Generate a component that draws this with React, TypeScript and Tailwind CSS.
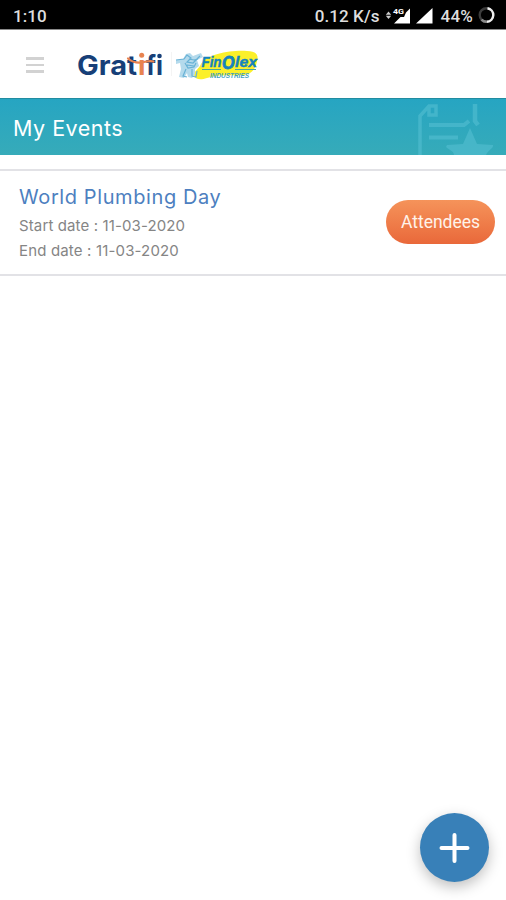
const EVENTS = [
  { title: 'World Plumbing Day', start: '11-03-2020', end: '11-03-2020' },
]

function StatusBar() {
  return (
    <div className="flex h-[30px] items-center border-b border-[#8a8a8a] bg-black pl-[13px] pr-[11px] pt-[3px] font-['Roboto',sans-serif] text-[17px] font-medium leading-none text-[#dedede]">
      <span className="tracking-[0.1px]">1:10</span>
      <span className="ml-auto tracking-[0.1px]">0.12 K/s</span>
      <svg className="ml-[5px]" width="50" height="20" viewBox="0 0 50 20" fill="#fff">
        <path d="M3.500 5.500 6.200 8.700H.8zM3.500 13 .8 9.800h5.400z" fill="#ccc" />
        <path d="M25 2.500v15H9l6.500-6.500h3.500l2-4.500z" />
        <text x="8" y="8" fontSize="8" fontWeight="700" textLength="11" lengthAdjust="spacingAndGlyphs">4G</text>
        <path d="M47.500 2v15.500H31z" />
      </svg>
      <span className="ml-[6px] text-[17px] tracking-[0.2px]">44%</span>
      <svg className="ml-[5px]" width="17" height="18" viewBox="0 0 17 18" fill="none" strokeWidth="2.400">
        <circle cx="8.500" cy="8" r="6.800" stroke="#3c3c3c" />
        <path d="M9.500 1.300A6.800 6.800 0 0 1 9 14.800" stroke="#eee" />
        <path d="M9 14.800A6.800 6.800 0 0 1 3.500 12.600" stroke="#8a8a8a" />
      </svg>
    </div>
  )
}

function GratifiLogo() {
  return (
    <svg width="88" height="36" viewBox="0 0 88 36" className="font-['Inter',sans-serif]">
      <g fontSize="27" fontWeight="700" fill="#173f78">
        <text x="1" y="28.500" textLength="50" lengthAdjust="spacingAndGlyphs">Gra</text>
        <text x="51" y="28.500" textLength="10" lengthAdjust="spacingAndGlyphs">t</text>
        <text x="62" y="28.500" fill="#e8834f" textLength="7.500" lengthAdjust="spacingAndGlyphs">ı</text>
        <text x="70" y="28.500" textLength="10" lengthAdjust="spacingAndGlyphs">f</text>
        <text x="80" y="28.500" textLength="7" lengthAdjust="spacingAndGlyphs">ı</text>
      </g>
      <circle cx="65.700" cy="9.300" r="2.500" fill="#e8834f" />
      <circle cx="83.500" cy="10" r="2.300" fill="#173f78" />
      <path d="M52 12.500c4 3.500 9 4.500 13.500 4 4-.500 8-2.500 12-1" fill="none" stroke="#e8834f" strokeWidth="2.200" strokeLinecap="round" />
    </svg>
  )
}

function FinolexLogo() {
  return (
    <svg width="86" height="36" viewBox="0 0 86 36" className="font-['Liberation_Sans',sans-serif]">
      <path d="M26 18C33 8 55 4 72 5c9 0 12 4 10 10-1 6-4 13-13 14-12 1-25-1-37 3-6 2-12 2-13-3 0-4 5-6 7-11z" fill="#fbf02a" />
      <path
        d="M1 14l7-1 3-5 4-1 3 3 8-3 2 4-6 3 2 6-4 3 0 5-3 4-4-1-1-4-3 5-5-1 2-8-1-6-4 1z"
        fill="#b4daec"
      />
      <path
        d="M1 14l8-1 3-4 4 3-4 4 6 1 7-7M10 17l3 5 6-1 2-4M11 23l-3 7 4 1M17 23l0 7 4 1 1-6M14 13l5 1 4-1M12 19l7 1"
        fill="none"
        stroke="#68b2d6"
        strokeWidth="1.200"
      />
      <g fill="#1583bd" stroke="#1583bd" strokeWidth=".4" fontWeight="700" fontStyle="italic">
        <text x="26.500" y="20.500" fontSize="14" textLength="20" lengthAdjust="spacingAndGlyphs">Fin</text>
        <text x="47" y="22.500" fontSize="17.500" strokeWidth=".8" textLength="12.500" lengthAdjust="spacingAndGlyphs">O</text>
        <text x="60" y="20.500" fontSize="14" textLength="22" lengthAdjust="spacingAndGlyphs">lex</text>
        <text x="35" y="31.500" fontSize="6.500" fill="#3f9fc0" strokeWidth="0" textLength="39" lengthAdjust="spacingAndGlyphs">INDUSTRIES</text>
      </g>
      <path d="M27 23.500h19M60 23.500h21" stroke="#4aa59a" strokeWidth="1" />
    </svg>
  )
}

function Header() {
  return (
    <header className="flex h-[68px] items-center bg-white pl-[26px]">
      <button aria-label="Menu" className="flex w-[18px] flex-col gap-1 pt-[2px]">
        <span className="h-[2.500px] bg-[#d2d2d2]" />
        <span className="h-[2.500px] bg-[#d2d2d2]" />
        <span className="h-[2.500px] bg-[#d2d2d2]" />
      </button>
      <div className="ml-8 flex items-center">
        <GratifiLogo />
        <span className="ml-[7px] mr-[3px] h-6 w-px bg-[#f4f4f4]" />
        <FinolexLogo />
      </div>
    </header>
  )
}

function TitleBar() {
  return (
    <div className="flex h-[57px] items-center justify-between border-t border-[#218ca0] bg-linear-to-b from-[#26a5c2] to-[#36abb9] pl-[13px] pr-[11px]">
      <h1 className="pt-[3px] text-[21.500px] leading-none tracking-[0.500px] text-white">My Events</h1>
      <svg width="78" height="56" viewBox="0 0 78 56" fill="none" stroke="#54bfd2" opacity=".6">
        <path d="M3 56V17L12 7h7v9h-7V8" strokeWidth="3.500" />
        <path d="M12 26h35l5-4M12 38.500h29" strokeWidth="4" />
        <path d="M58 5v17l3 4" strokeWidth="4.500" />
        <path d="M53 29l7 16 16 1c1 3-5 5-7 10H37c0-4-5-5-8-8l1-2 16-1z" fill="#54bfd2" stroke="none" />
      </svg>
    </div>
  )
}

function EventCard({ title, start, end }: { title: string; start: string; end: string }) {
  return (
    <div className="flex h-[107px] items-center justify-between border-y-2 border-[#e2e2e6] bg-white pl-[19px] pr-[11px]">
      <div className="flex flex-col">
        <h2 className="pt-px text-[20px] leading-7 tracking-[0.600px] text-[#4d7fc0]">{title}</h2>
        <p className="mt-[2px] text-[15px] leading-[25px] tracking-[0.120px] text-[#858585]">Start date : {start}</p>
        <p className="text-[15px] leading-[25px] tracking-[0.160px] text-[#858585]">End date : {end}</p>
      </div>
      <button className="mb-[2px] h-[44px] w-[109px] rounded-full bg-linear-to-b from-[#f5935a] to-[#e9683a] pt-[2px] font-['Roboto',sans-serif] text-[17.500px] text-[#fff3ea]">
        Attendees
      </button>
    </div>
  )
}

export default function App() {
  return (
    <div className="relative h-[900px] w-[506px] overflow-hidden bg-white font-['Inter',sans-serif]">
      <StatusBar />
      <Header />
      <TitleBar />
      <main className="pt-[14px]">
        {EVENTS.map(e => (
          <EventCard key={e.title} {...e} />
        ))}
      </main>
      <button
        aria-label="Add event"
        className="absolute bottom-[18px] right-[17px] flex size-[69px] items-center justify-center rounded-full bg-[#3880b8] shadow-[0_5px_14px_rgba(0,0,0,0.25)]"
      >
        <svg width="32" height="32" viewBox="0 0 32 32" stroke="#fff" strokeWidth="4" strokeLinecap="round">
          <path d="M15.500 3v26M2.500 16h26" />
        </svg>
      </button>
    </div>
  )
}
